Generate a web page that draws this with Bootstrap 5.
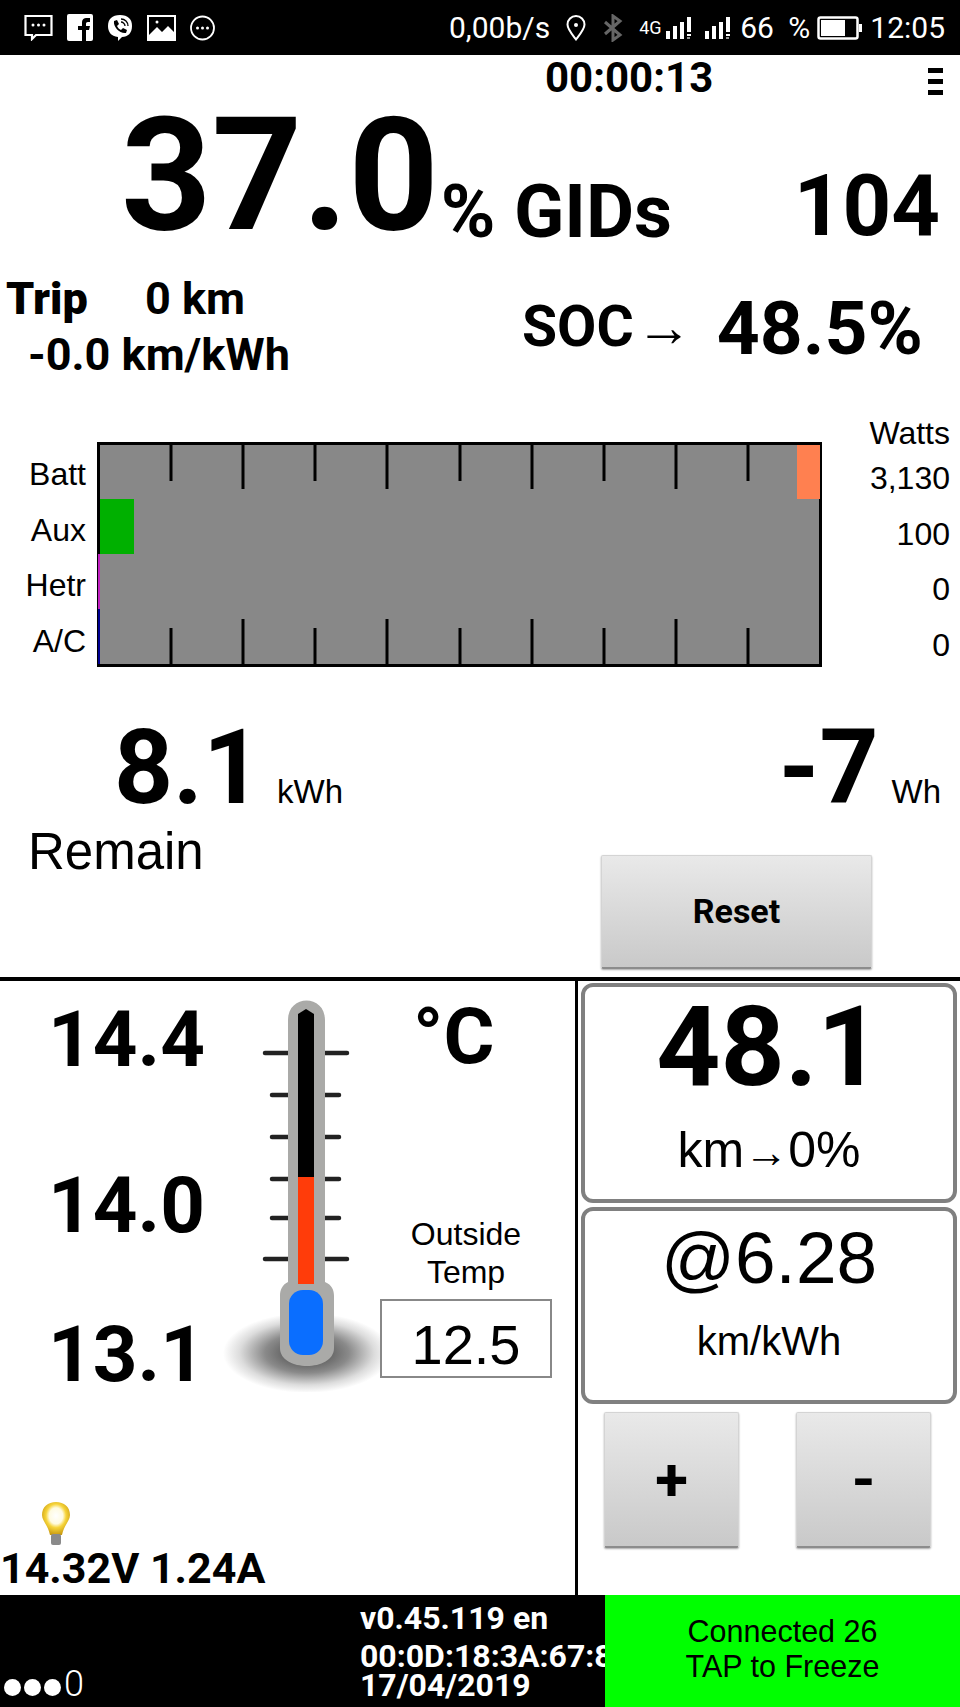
<!DOCTYPE html>
<html lang="en">
<head>
    <meta charset="UTF-8" />
    <title>Leaf Spy</title>
    <link href="https://cdn.jsdelivr.net/npm/bootstrap@5.3.0/dist/css/bootstrap.min.css" rel="stylesheet" />

    <style>
      body {
          width: 960px;
          height: 1707px;
          overflow: hidden;
          font-family: Roboto, "Liberation Sans", sans-serif;
          color: #000;
          background: #fff;
      }

      .one-line { line-height: 1; white-space: nowrap; }
      .heavy { font-weight: 700; }
      .helv { font-family: "Liberation Sans", Arial, sans-serif; font-weight: 400; }

      /* phone status bar */
      .status-bar { height: 55px; padding: 0 15px 0 24px; font-size: 30px; }
      .status-left { gap: 14px; }
      .st-pin { margin-left: 16px; }
      .st-bt { margin-left: 17px; }
      .st-net { margin-left: 16px; width: 26px; font-size: 18px; }
      .st-sig { margin-left: 0; }
      .st-sig2 { margin-left: 9px; }
      .st-pct { margin-left: 6px; word-spacing: 7px; }
      .st-batt { margin-left: 7px; }
      .st-time { margin-left: 8px; }

      /* top block */
      .top-block { height: 922px; }
      .timer-row { height: 50px; padding-left: 545px; padding-right: 17px; }
      .timer { font-size: 42px; padding-top: 2px; }
      .menu-bars { width: 15px; margin-top: 13px; gap: 6px; }
      .menu-bars span { height: 5px; background: #000; }

      .hero-row { height: 150px; padding-left: 121px; padding-right: 20px; }
      .hero-num { font-size: 158px; margin-bottom: 1px; }
      .hero-gids { font-size: 74px; margin-left: 2px; margin-bottom: 6px; }
      .hero-count { font-size: 85px; margin-bottom: 6px; }

      .trip-row { height: 162px; padding-right: 37px; }
      .trip-lines { font-size: 45px; line-height: 56px; padding-top: 16px; }
      .trip-one { padding-left: 6px; }
      .trip-one b { display: inline-block; width: 139px; }
      .trip-two { padding-left: 28px; }
      .soc-label { font-size: 57px; margin-bottom: 62px; }
      .soc-value { font-size: 75px; margin-left: 25px; margin-bottom: 51px; }
      .soc-arrow { font-size: 56px; font-weight: 400; margin-left: 2px; }

      .gauge-row { height: 250px; }
      .gauge-labels { width: 97px; padding: 31px 11px 0 0; font-size: 32px; text-align: right; }
      .gauge-labels div { height: 55.5px; line-height: 52px; }
      .gauge-watts { flex: 1; padding: 0 10px 0 0; font-size: 32px; text-align: right; }
      .gauge-watts div { height: 55.5px; line-height: 32px; }
      .gauge-watts .watts-head { height: 45px; }
      .gauge-chart { margin-top: 25px; display: block; }

      .energy-row { height: 255px; }
      .energy-one { padding-left: 114px; margin-top: 49px; }
      .energy-num { font-size: 103px; }
      .energy-unit { font-size: 33px; margin-left: 15px; margin-bottom: 11px; }
      .remain { font-size: 51px; margin-top: 7px; padding-left: 28px; }
      .energy-right { width: 359px; }
      .energy-two { margin-top: 49px; padding-right: 19px; }
      .energy-two .energy-unit { margin-left: 13px; }
      .gray-btn {
          background: linear-gradient(#e9e9e9, #c9c9c9);
          border: 1px solid #d4d4d4;
          border-bottom: 2px solid #8c8c8c;
          border-radius: 2px;
          box-shadow: 0 1px 2px rgba(0, 0, 0, .35);
          color: #000;
          font-weight: 700;
          padding: 0;
      }
      .reset-btn { width: 271px; height: 114px; font-size: 34px; margin-top: 36px; }

      .main-rule { height: 4px; background: #000; }

      /* lower panels */
      .lower { height: 614px; }
      .left-panel { width: 578px; border-right: 3px solid #000; }
      .temps { width: 222px; padding-left: 48px; font-size: 78px; font-weight: 700; }
      .temp-a { margin-top: 20px; }
      .temp-b { margin-top: 88px; }
      .temp-c { margin-top: 71px; }
      .thermo { display: block; margin-top: 19px; }
      .outside { width: 172px; }
      .degrees { font-size: 78px; font-weight: 700; margin-top: 17px; padding-left: 33px; }
      .outside-label { font-size: 32px; line-height: 38px; text-align: center; margin-top: 139px; }
      .outside-box { height: 79px; border: 2px solid #888; margin-top: 8px; padding-top: 12px; font-size: 56px; }
      .bulb { display: block; margin-left: 41px; }
      .volts { font-size: 43px; font-weight: 700; margin-bottom: 5px; }

      .right-panel { width: 382px; padding: 2px 3px 0; gap: 4px; }
      .range-box { border: 4px solid #808080; border-radius: 12px; text-align: center; }
      .range-a { height: 220px; }
      .range-b { height: 197px; }
      .range-big { font-size: 112px; font-weight: 700; padding-top: 4px; }
      .range-sub { font-size: 50px; margin-top: 22px; }
      .range-sub span { font-size: 44px; }
      .range-mid { font-size: 73px; padding-top: 10px; }
      .range-small { font-size: 40px; margin-top: 27px; }
      .step-row { padding-left: 23px; gap: 57px; margin-top: 4px; }
      .step-btn { width: 135px; height: 136px; font-size: 60px; }

      /* black footer */
      .foot { height: 112px; }
      .foot-dark { width: 605px; overflow: hidden; }
      .foot-signal { width: 360px; flex-shrink: 0; padding: 0 0 5px 4px; gap: 3px; font-size: 36px; font-weight: 300; }
      .foot-signal i { width: 17px; height: 17px; border-radius: 50%; background: #fff; margin-bottom: 6px; }
      .foot-version { font-size: 32px; font-weight: 700; line-height: 29px; padding-top: 9px; }
      .foot-version .ver-one { margin-bottom: 9px; }
      .foot-green { width: 355px; background: #0f0; font-size: 30.5px; line-height: 35px; text-align: center; padding-bottom: 4px; }
    </style>
</head>
<body>

<!-- Android status bar -->
<div class="status-bar d-flex align-items-center justify-content-between text-white bg-black">
    <div class="status-left d-flex align-items-center">
        <svg width="29" height="27" viewBox="0 0 29 27" fill="none" stroke="#fff" stroke-width="2.200"><path d="M1.500 2h26v19H12l-4 4v-4H1.500z"/><g fill="#fff" stroke="none"><circle cx="9" cy="11" r="1.500"/><circle cx="14.500" cy="11" r="1.500"/><circle cx="20" cy="11" r="1.500"/></g></svg>
        <svg class="ms-0" width="26" height="27" viewBox="0 0 26 27"><rect width="26" height="27" rx="2" fill="#fff"/><path d="M15 27V16h-4v-4h4V9c0-4 2-5 5-5h3v4h-2c-2 0-2 1-2 2v2h4l-1 4h-3v11z" fill="#000"/></svg>
        <svg width="26" height="28" viewBox="0 0 26 28"><path d="M13 1c8 0 12 4 12 11s-4 11-10 11l-4 4v-4C4 22 1 18 1 12 1 5 5 1 13 1z" fill="#fff"/><path d="M7 7l3-1 2 4-2 2c1 2 2 3 4 4l2-2 4 2-1 3C13 20 6 13 7 7z" fill="#000"/><path d="M14 5c4 0 7 3 7 7M14 8c2 0 4 2 4 4" stroke="#000" stroke-width="1.300" fill="none"/></svg>
        <svg class="ms-0" width="29" height="26" viewBox="0 0 29 26"><rect x="1" y="1" width="27" height="24" fill="none" stroke="#fff" stroke-width="2"/><path d="M2 24v-4l8-8 5 5 6-6 6 6v7z" fill="#fff"/><circle cx="10" cy="7" r="1.500" fill="#fff"/></svg>
        <svg width="25" height="26" viewBox="0 0 25 26" fill="none" stroke="#fff" stroke-width="1.800"><circle cx="12.500" cy="13" r="11.500"/><g fill="#fff" stroke="none"><circle cx="7.500" cy="13" r="1.500"/><circle cx="12.500" cy="13" r="1.500"/><circle cx="17.500" cy="13" r="1.500"/></g></svg>
    </div>
    <div class="d-flex align-items-center">
        <span>0,00b/s</span>
        <svg class="st-pin" width="20" height="26" viewBox="0 0 20 26" fill="none" stroke="#fff" stroke-width="2"><path d="M10 24.500C5 18 1.500 14 1.500 9.500a8.500 8.500 0 0 1 17 0C18.500 14 15 18 10 24.500z"/><circle cx="10" cy="10" r="2" fill="#fff" stroke="none"/></svg>
        <svg class="st-bt" width="20" height="28" viewBox="0 0 20 28" fill="none" stroke="#666" stroke-width="3"><path d="M2 8l15 13-7 5V2l7 5L2 20"/></svg>
        <span class="st-net one-line">4G</span>
        <svg class="st-sig" width="30" height="24" viewBox="0 0 30 24" fill="#fff"><rect x="1" y="15" width="4" height="8"/><rect x="8" y="10" width="4" height="13"/><rect x="15" y="6" width="4" height="17"/><rect x="22" y="1" width="4" height="15"/><rect x="22" y="18" width="4" height="2"/><rect x="22" y="21" width="3" height="2" opacity=".6"/></svg>
        <svg class="st-sig2" width="30" height="24" viewBox="0 0 30 24" fill="#fff"><rect x="1" y="15" width="4" height="8"/><rect x="8" y="10" width="4" height="13"/><rect x="15" y="6" width="4" height="17"/><rect x="22" y="1" width="4" height="15"/><rect x="22" y="18" width="4" height="2"/><rect x="22" y="21" width="3" height="2" opacity=".6"/></svg>
        <span class="st-pct">66 %</span>
        <svg class="st-batt" width="45" height="24" viewBox="0 0 45 24"><rect x="1.500" y="1.500" width="39" height="21" rx="2" fill="none" stroke="#fff" stroke-width="2.500"/><rect x="4" y="4" width="24" height="16" fill="#fff"/><rect x="42" y="8" width="3" height="8" fill="#fff"/></svg>
        <span class="st-time">12:05</span>
    </div>
</div>

<div class="top-block">
    <div class="timer-row d-flex justify-content-between">
        <div class="timer one-line heavy">00:00:13</div>
        <div class="menu-bars d-flex flex-column"><span></span><span></span><span></span></div>
    </div>

    <div class="hero-row d-flex align-items-end one-line heavy">
        <div class="hero-num">37.0</div>
        <div class="hero-gids">% GIDs</div>
        <div class="hero-count ms-auto">104</div>
    </div>

    <div class="trip-row d-flex justify-content-between">
        <div class="trip-lines heavy text-nowrap">
            <div class="trip-one"><b>Trip</b>0 km</div>
            <div class="trip-two">-0.0 km/kWh</div>
        </div>
        <div class="d-flex align-items-end one-line heavy">
            <div class="soc-label">SOC<span class="soc-arrow">→</span></div>
            <div class="soc-value">48.5%</div>
        </div>
    </div>

    <div class="gauge-row d-flex">
        <div class="gauge-labels helv text-nowrap">
            <div>Batt</div>
            <div>Aux</div>
            <div>Hetr</div>
            <div>A/C</div>
        </div>
        <svg class="gauge-chart" width="725" height="225" viewBox="0 0 725 225">
            <rect width="725" height="225" fill="#000"/>
            <rect x="3" y="3" width="719" height="219" fill="#888"/>
            <rect x="700" y="3" width="23" height="54" fill="#ff8050"/>
            <rect x="3" y="57" width="34" height="55" fill="#00b000"/>
            <rect x="1" y="112" width="2" height="55" fill="#c020c0"/>
            <rect x="1" y="167" width="2" height="55" fill="#000090"/>
            <path d="M74 3v36M146 3v44M218 3v36M290 3v44M363 3v36M435 3v44M507 3v36M579 3v44M651 3v36M74 222v-36M146 222v-45M218 222v-36M290 222v-45M363 222v-36M435 222v-45M507 222v-36M579 222v-45M651 222v-36" stroke="#000" stroke-width="3"/>
        </svg>
        <div class="gauge-watts helv text-nowrap">
            <div class="watts-head">Watts</div>
            <div>3,130</div>
            <div>100</div>
            <div>0</div>
            <div>0</div>
        </div>
    </div>

    <div class="energy-row d-flex justify-content-between">
        <div>
            <div class="energy-one d-flex align-items-end one-line">
                <div class="energy-num heavy">8.1</div>
                <div class="energy-unit helv">kWh</div>
            </div>
            <div class="remain helv one-line">Remain</div>
        </div>
        <div class="energy-right">
            <div class="energy-two d-flex justify-content-end align-items-end one-line">
                <div class="energy-num heavy">-7</div>
                <div class="energy-unit helv">Wh</div>
            </div>
            <button type="button" class="btn gray-btn reset-btn">Reset</button>
        </div>
    </div>
</div>

<div class="main-rule"></div>

<div class="lower d-flex">
    <div class="left-panel d-flex flex-column">
        <div class="d-flex">
            <div class="temps one-line">
                <div class="temp-a">14.4</div>
                <div class="temp-b">14.0</div>
                <div class="temp-c">13.1</div>
            </div>
            <!-- thermometer, 222,1000 is its origin -->
            <svg class="thermo" width="158" height="392" viewBox="0 0 158 392">
                <defs>
                    <radialGradient id="thermoShadow">
                        <stop offset="0" stop-color="#3c3c3c"/>
                        <stop offset=".5" stop-color="#8a8a8a"/>
                        <stop offset=".8" stop-color="#dcdcdc"/>
                        <stop offset="1" stop-color="#fff"/>
                    </radialGradient>
                    <filter id="soften" x="-10%" y="-10%" width="120%" height="120%">
                        <feGaussianBlur stdDeviation=".7"/>
                    </filter>
                </defs>
                <ellipse cx="85" cy="353" rx="84" ry="40" fill="url(#thermoShadow)"/>
                <g filter="url(#soften)">
                    <path d="M43 53h23M101 53h24M50 95h16M101 95h16M50 137h16M101 137h16M50 179h16M101 179h16M50 218h16M101 218h16M43 259h23M101 259h24" stroke="#222" stroke-width="4.500" stroke-linecap="round"/>
                    <path d="M66 20c0-26 37-26 37 0v262c7 3 9 8 9 14v52c0 24-54 24-54 0v-52c0-6 2-11 8-14z" fill="#aaaaa8"/>
                </g>
                <path d="M76 14l8-5 8 5v163H76z" fill="#000"/>
                <rect x="76" y="177" width="16" height="107" fill="#ff3c0a"/>
                <rect x="67" y="290" width="34" height="65" rx="14" fill="#0a6eff"/>
            </svg>
            <div class="outside">
                <div class="degrees one-line">°C</div>
                <div class="outside-label helv">Outside<br>Temp</div>
                <div class="outside-box helv d-flex align-items-center justify-content-center">12.5</div>
            </div>
        </div>
        <div class="mt-auto">
            <svg class="bulb" width="30" height="46" viewBox="0 0 30 46">
                <defs>
                    <radialGradient id="bulbGlow" cx=".5" cy=".42" r=".58">
                        <stop offset="0" stop-color="#fff"/>
                        <stop offset=".42" stop-color="#fffbe0"/>
                        <stop offset=".62" stop-color="#f6d43a"/>
                        <stop offset="1" stop-color="#c99a10"/>
                    </radialGradient>
                </defs>
                <path d="M15 1c8 0 14 5 14 13 0 6-6 10-8 20H9C7 24 1 20 1 14 1 6 7 1 15 1z" fill="url(#bulbGlow)"/>
                <rect x="10" y="33" width="10" height="11" rx="2" fill="#8a8a8a"/>
            </svg>
            <div class="volts one-line">14.32V 1.24A</div>
        </div>
    </div>
    <div class="right-panel d-flex flex-column">
        <div class="range-box range-a one-line">
            <div class="range-big">48.1</div>
            <div class="range-sub helv">km<span>→</span>0%</div>
        </div>
        <div class="range-box range-b one-line">
            <div class="range-mid helv">@6.28</div>
            <div class="range-small helv">km/kWh</div>
        </div>
        <div class="step-row d-flex">
            <button type="button" class="btn gray-btn step-btn">+</button>
            <button type="button" class="btn gray-btn step-btn">-</button>
        </div>
    </div>
</div>

<div class="foot d-flex">
    <div class="foot-dark d-flex bg-black text-white text-nowrap">
        <div class="foot-signal d-flex align-items-end one-line">
            <i></i><i></i><i></i><span>0</span>
        </div>
        <div class="foot-version">
            <div class="ver-one">v0.45.119 en</div>
            <div>00:0D:18:3A:67:8F</div>
            <div>17/04/2019</div>
        </div>
    </div>
    <div class="foot-green helv d-flex flex-column justify-content-center">
        <div>Connected 26</div>
        <div>TAP to Freeze</div>
    </div>
</div>

<script src="https://cdn.jsdelivr.net/npm/bootstrap@5.3.0/dist/js/bootstrap.bundle.min.js"></script>
</body>
</html>
